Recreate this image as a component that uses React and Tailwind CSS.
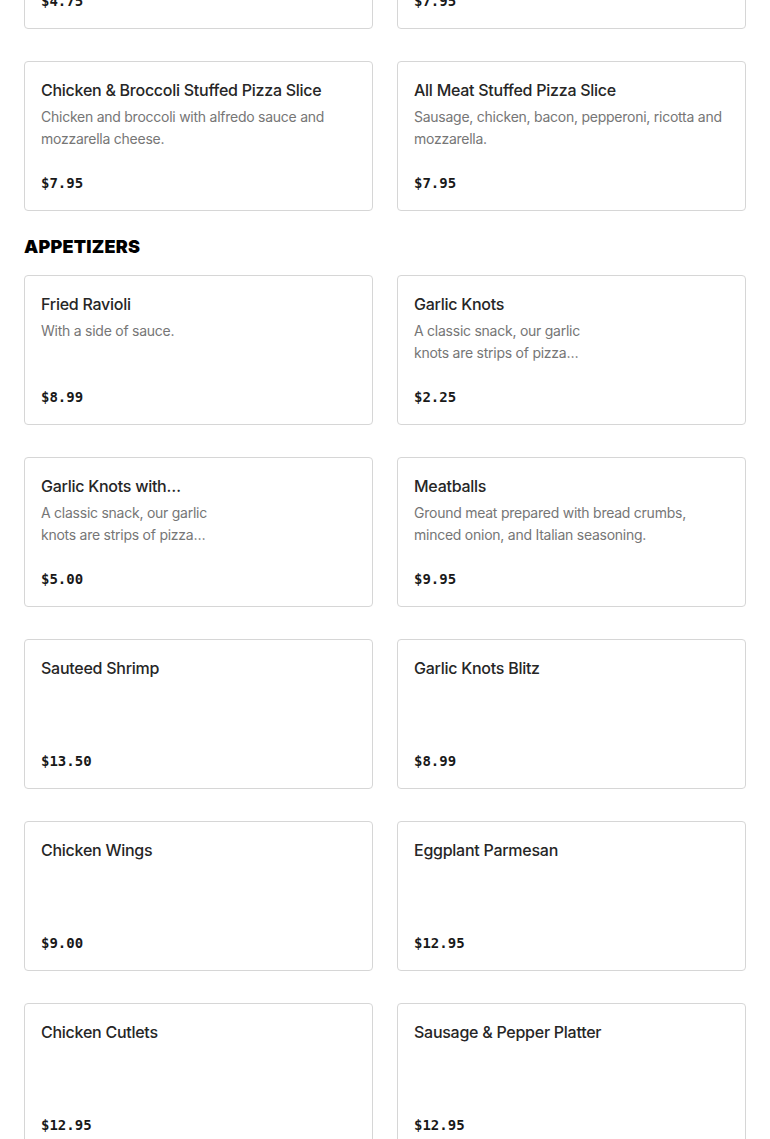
import React from "react";

const topRow = [
  { title: "Sausage Stuffed Pizza Slice", desc: "Sausage, ricotta and mozzarella cheese.", price: "$4.75" },
  { title: "Buffalo Chicken Stuffed Pizza Slice", desc: "Buffalo chicken with mozzarella cheese.", price: "$7.95" },
  {
    title: "Chicken & Broccoli Stuffed Pizza Slice",
    desc: "Chicken and broccoli with alfredo sauce and mozzarella cheese.",
    price: "$7.95",
  },
  {
    title: "All Meat Stuffed Pizza Slice",
    desc: "Sausage, chicken, bacon, pepperoni, ricotta and mozzarella.",
    price: "$7.95",
  },
];

const appetizers = [
  { title: "Fried Ravioli", desc: "With a side of sauce.", price: "$8.99" },
  { title: "Garlic Knots", desc: "A classic snack, our garlic knots are strips of pizza…", price: "$2.25", narrow: true },
  { title: "Garlic Knots with…", desc: "A classic snack, our garlic knots are strips of pizza…", price: "$5.00", narrow: true },
  {
    title: "Meatballs",
    desc: "Ground meat prepared with bread crumbs, minced onion, and Italian seasoning.",
    price: "$9.95",
  },
  { title: "Sauteed Shrimp", price: "$13.50" },
  { title: "Garlic Knots Blitz", price: "$8.99" },
  { title: "Chicken Wings", price: "$9.00" },
  { title: "Eggplant Parmesan", price: "$12.95" },
  { title: "Chicken Cutlets", price: "$12.95" },
  { title: "Sausage & Pepper Platter", price: "$12.95" },
];

function Card({ item }) {
  return (
    <div className="flex h-[150px] flex-col rounded-[4px] border border-[#d6d6d6] bg-white p-4">
      <div className={item.narrow ? "max-w-[175px]" : ""}>
        <h3 className="text-[16px] leading-6 font-medium text-[#262626] font-['Inter',sans-serif] tracking-[-0.26px]">
          {item.title}
        </h3>
        {item.desc && (
          <p className="mt-1 text-[14px] leading-[22px] text-[#767676] font-['Inter',sans-serif] tracking-[-0.25px]">
            {item.desc}
          </p>
        )}
      </div>
      <div className="mt-auto text-[14px] leading-[22px] font-bold text-[#191919] font-['DejaVu_Sans_Mono',monospace]">
        {item.price}
      </div>
    </div>
  );
}

export default function App() {
  return (
    <div className="min-h-screen overflow-hidden bg-white px-6">
      <div className="-mt-[121px] grid grid-cols-2 gap-x-6 gap-y-8">
        {topRow.map((it, i) => (
          <Card key={i} item={it} />
        ))}
      </div>
      <h2 className="mt-[26px] mb-[18px] text-[18px] leading-5 font-black uppercase text-black font-['Inter',sans-serif] tracking-[0.2px]">
        Appetizers
      </h2>
      <div className="grid grid-cols-2 gap-x-6 gap-y-8 pb-8">
        {appetizers.map((it, i) => (
          <Card key={i} item={it} />
        ))}
      </div>
    </div>
  );
}
